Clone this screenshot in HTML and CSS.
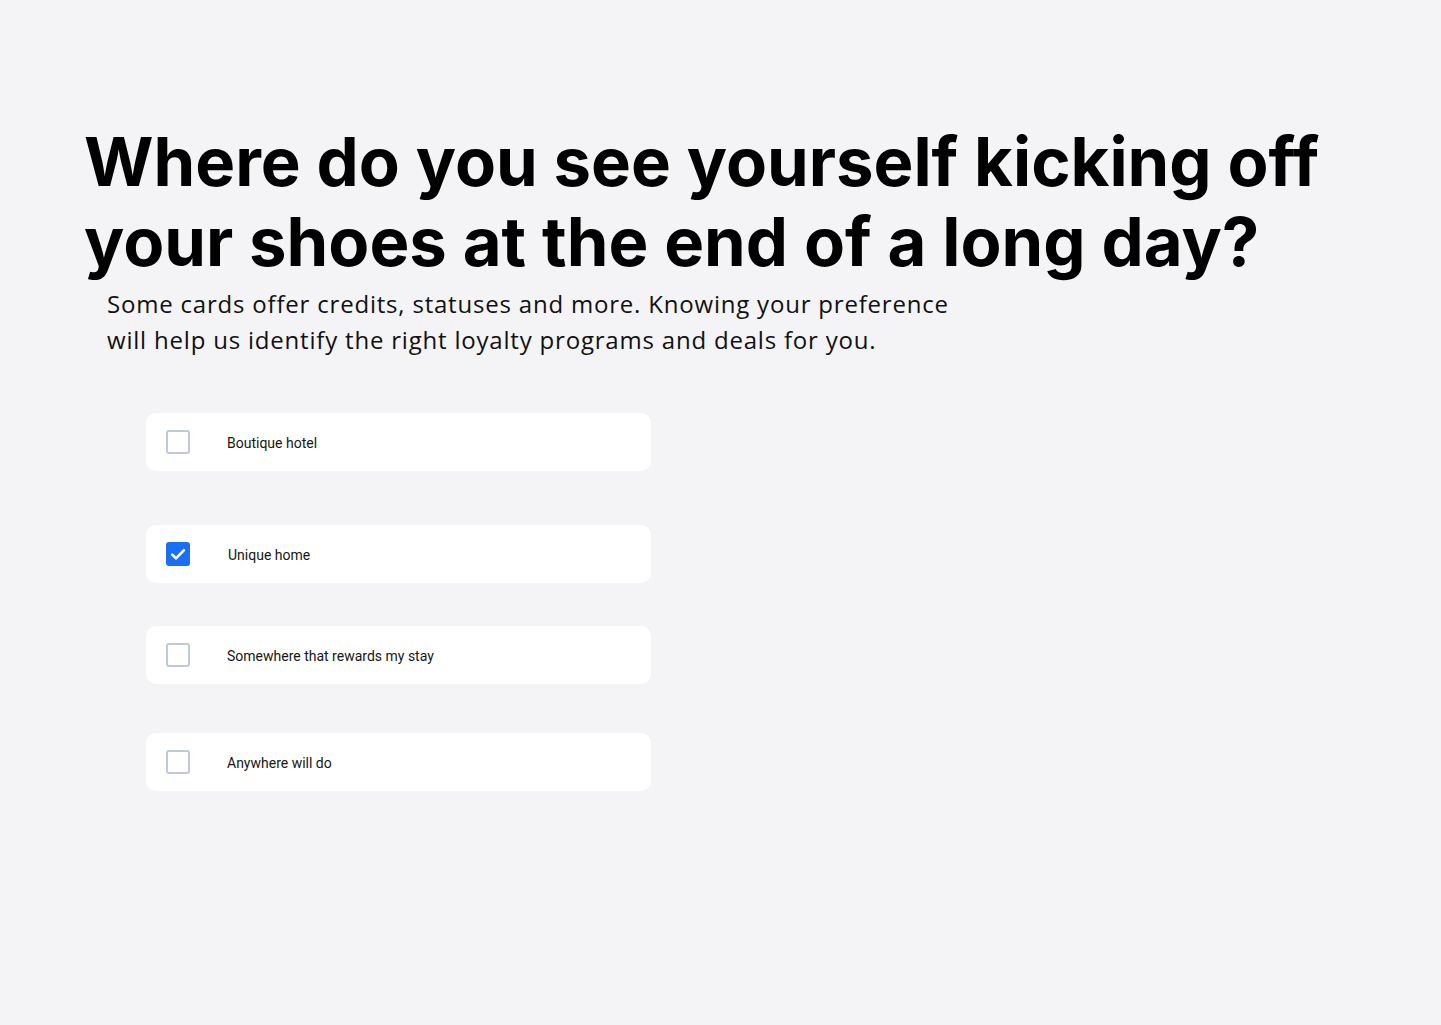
FILE: index.html
```html
<!DOCTYPE html>
<html lang="en">
<head>
<meta charset="utf-8">
<title>Where do you see yourself</title>
<link rel="stylesheet" href="styles.css">
</head>
<body>
<main class="page">
  <h1 class="title">Where do you see yourself kicking off<br>your shoes at the end of a long day?</h1>
  <p class="subtitle">Some cards offer credits, statuses and more. Knowing your preference<br>will help us identify the right loyalty programs and deals for you.</p>
  <ul class="options">
    <li class="option">
      <span class="box"></span>
      <span class="label">Boutique hotel</span>
    </li>
    <li class="option option--gap-lg">
      <span class="box box--checked">
        <svg viewBox="0 0 24 24" width="24" height="24"><path d="M6.2 12.6l3.8 3.7 7.8-8" fill="none" stroke="#fff" stroke-width="2.6" stroke-linecap="round" stroke-linejoin="round"/></svg>
      </span>
      <span class="label label--shift">Unique home</span>
    </li>
    <li class="option option--gap-sm">
      <span class="box"></span>
      <span class="label">Somewhere that rewards my stay</span>
    </li>
    <li class="option option--gap-md">
      <span class="box"></span>
      <span class="label">Anywhere will do</span>
    </li>
  </ul>
</main>
</body>
</html>
```

FILE: styles.css
```css
* { box-sizing: border-box; }
html, body { margin: 0; padding: 0; }
body {
  background: #f4f4f6;
  width: 1441px;
  height: 1025px;
  overflow: hidden;
}
.page {
  padding: 122px 0 0 84px;
}
.title {
  margin: 0;
  font-family: "Inter", sans-serif;
  font-weight: 700;
  font-size: 67px;
  line-height: 80px;
  color: #000;
}
.subtitle {
  margin: 4px 0 0 23px;
  font-family: "Open Sans", sans-serif;
  font-size: 24px;
  line-height: 36px;
  letter-spacing: 0.8px;
  color: #111;
}
.options {
  list-style: none;
  margin: 55px 0 0 62px;
  padding: 0;
  width: 505px;
}
.option {
  display: flex;
  align-items: center;
  height: 58px;
  background: #fff;
  border-radius: 10px;
  padding-left: 20px;
}
.option--gap-lg { margin-top: 54px; }
.option--gap-sm { margin-top: 43px; }
.option--gap-md { margin-top: 49px; }
.box {
  width: 24px;
  height: 24px;
  border: 2px solid #bccadb;
  border-radius: 3px;
  flex: none;
  display: flex;
}
.box--checked {
  background: #1a6ff5;
  border: none;
}
.label {
  margin-left: 37px;
  padding-top: 2px;
  font-family: "Roboto", sans-serif;
  font-size: 14px;
  color: #161616;
}
.label--shift { margin-left: 38px; }
```
